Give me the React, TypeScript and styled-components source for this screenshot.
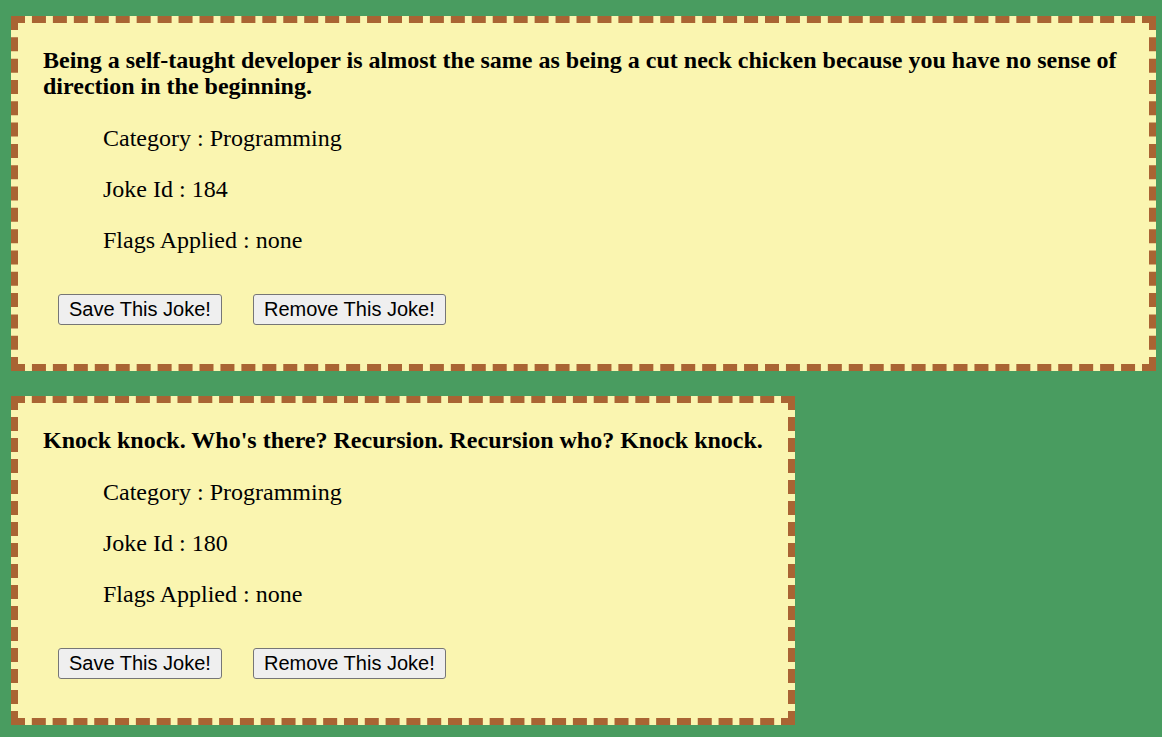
import React from "react";
import styled, { createGlobalStyle } from "styled-components";

const GlobalStyle = createGlobalStyle`
  html, body {
    margin: 0;
    padding: 0;
    background: #499c60;
  }
  body {
    font-family: "Liberation Serif", "Times New Roman", serif;
    color: #000;
  }
`;

const Page = styled.main`
  display: flex;
  flex-direction: column;
  align-items: flex-start;
  gap: 25px;
  padding: 16px 6px 16px 11px;
  min-height: 737px;
  box-sizing: border-box;
`;

const Card = styled.section`
  box-sizing: border-box;
  max-width: 100%;
  border: 7px dashed #a96433;
  background: #faf5b0;
  padding: 24px 25px 39px 25px;
`;

const Setup = styled.h3`
  margin: 0 0 26px;
  font-size: 24px;
  line-height: 26px;
  font-weight: bold;
`;

const Detail = styled.p`
  margin: 0 0 24px;
  padding-left: 60px;
  font-size: 24px;
  line-height: 27px;
`;

const Actions = styled.div`
  display: flex;
  gap: 31px;
  margin: 40px 0 0 15px;
`;

const Button = styled.button`
  font-family: "Liberation Sans", Arial, sans-serif;
  font-size: 20px;
  line-height: 23px;
  color: #000;
  background: #efefef;
  border: 1px solid #767676;
  border-radius: 3px;
  padding: 3px 10px;
  cursor: pointer;
`;

const DetailList = styled.div`
  & > p:last-child {
    margin-bottom: 0;
  }
`;

type Joke = { text: string; category: string; id: number; flags: string };

const jokes: Joke[] = [
  {
    text:
      "Being a self-taught developer is almost the same as being a cut neck chicken because you have no sense of direction in the beginning.",
    category: "Programming",
    id: 184,
    flags: "none",
  },
  {
    text: "Knock knock. Who's there? Recursion. Recursion who? Knock knock.",
    category: "Programming",
    id: 180,
    flags: "none",
  },
];

export default function App() {
  return (
    <>
      <GlobalStyle />
      <Page>
        {jokes.map((j) => (
          <Card key={j.id}>
            <Setup>{j.text}</Setup>
            <DetailList>
              <Detail>Category : {j.category}</Detail>
              <Detail>Joke Id : {j.id}</Detail>
              <Detail>Flags Applied : {j.flags}</Detail>
            </DetailList>
            <Actions>
              <Button>Save This Joke!</Button>
              <Button>Remove This Joke!</Button>
            </Actions>
          </Card>
        ))}
      </Page>
    </>
  );
}
